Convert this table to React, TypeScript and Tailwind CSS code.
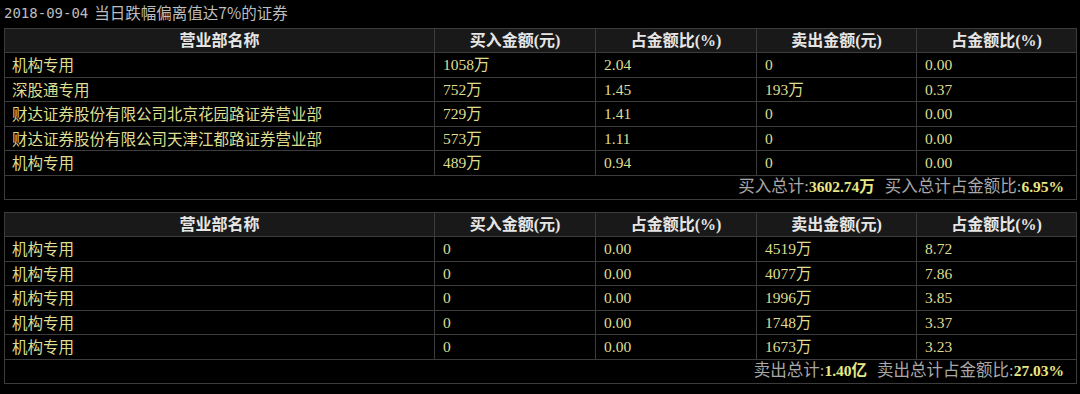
import React from 'react';

type Row = [string, string, string, string, string];

const buyRows: Row[] = [
  ['机构专用', '1058万', '2.04', '0', '0.00'],
  ['深股通专用', '752万', '1.45', '193万', '0.37'],
  ['财达证券股份有限公司北京花园路证券营业部', '729万', '1.41', '0', '0.00'],
  ['财达证券股份有限公司天津江都路证券营业部', '573万', '1.11', '0', '0.00'],
  ['机构专用', '489万', '0.94', '0', '0.00'],
];

const sellRows: Row[] = [
  ['机构专用', '0', '0.00', '4519万', '8.72'],
  ['机构专用', '0', '0.00', '4077万', '7.86'],
  ['机构专用', '0', '0.00', '1996万', '3.85'],
  ['机构专用', '0', '0.00', '1748万', '3.37'],
  ['机构专用', '0', '0.00', '1673万', '3.23'],
];

const headers = ['营业部名称', '买入金额(元)', '占金额比(%)', '卖出金额(元)', '占金额比(%)'];

const serif = "font-['Liberation_Serif','Noto_Sans_CJK_SC',serif]";
const sans = "font-['Noto_Sans_CJK_SC','Noto_Sans',sans-serif]";

function Table({ rows, footer }: { rows: Row[]; footer: [string, string, string, string] }) {
  return (
    <table className="w-[1072px] border-collapse border border-[#3c3c3c] table-fixed">
      <colgroup>
        <col className="w-[430px]" />
        <col className="w-[161px]" />
        <col className="w-[161px]" />
        <col className="w-[160px]" />
        <col className="w-[160px]" />
      </colgroup>
      <thead>
        <tr className="h-[24px] bg-[#191919]">
          {headers.map((h, i) => (
            <th
              key={i}
              className={`border border-[#3c3c3c] p-0 text-center text-[16px] leading-none font-bold text-[#e6e6e6] ${serif}`}
            >
              {h}
            </th>
          ))}
        </tr>
      </thead>
      <tbody>
        {rows.map((r, ri) => (
          <tr key={ri} className="h-[24.5px]">
            {r.map((c, ci) => (
              <td
                key={ci}
                className={`border border-[#3c3c3c] p-0 text-left text-[15.5px] leading-none text-[#dede92] ${
                  ci === 0 ? `pl-[7px] ${sans}` : `pl-[8px] ${serif}`
                }`}
              >
                {c}
              </td>
            ))}
          </tr>
        ))}
        <tr className="h-[24.5px]">
          <td colSpan={5} className={`border border-[#3c3c3c] p-0 pr-[12px] text-right leading-none ${serif}`}>
            <span className="text-[16.5px] text-[#a8a8a8]">{footer[0]}</span>
            <span className="text-[15.5px] font-bold text-[#e8e884]">{footer[1]}</span>
            <span className="ml-[10px] text-[16.5px] text-[#a8a8a8]">{footer[2]}</span>
            <span className="text-[15.5px] font-bold text-[#e8e884]">{footer[3]}</span>
          </td>
        </tr>
      </tbody>
    </table>
  );
}

export default function App() {
  return (
    <div className="w-[1080px] h-[394px] bg-black pl-[4px] overflow-hidden">
      <div className="h-[28px] flex items-center pb-[2px] text-[#bdbdbd]">
        <span className="font-['DejaVu_Sans_Mono',monospace] text-[14px]">2018-09-04</span>
        <span className={`ml-[6px] text-[15.5px] ${sans}`}>当日跌幅偏离值达7%的证券</span>
      </div>
      <Table rows={buyRows} footer={['买入总计:', '3602.74万', '买入总计占金额比:', '6.95%']} />
      <div className="h-[12px]" />
      <Table rows={sellRows} footer={['卖出总计:', '1.40亿', '卖出总计占金额比:', '27.03%']} />
    </div>
  );
}
